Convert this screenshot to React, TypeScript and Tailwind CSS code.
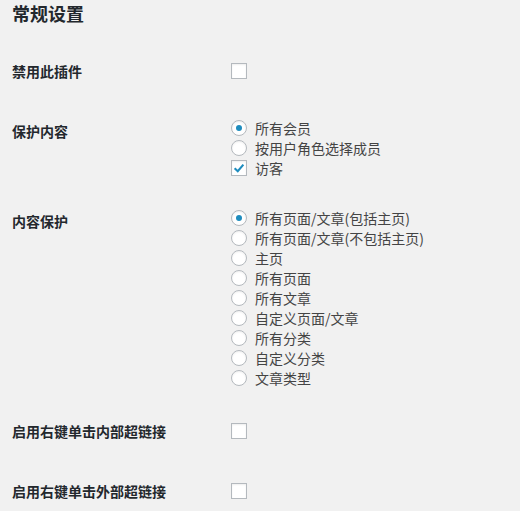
import React from 'react';

const font = { fontFamily: '"Noto Sans CJK SC", "Noto Sans", sans-serif' };

const Checkbox: React.FC<{ checked?: boolean }> = ({ checked }) => (
  <span className="flex h-4 w-4 shrink-0 items-center justify-center border border-[#b4b9be] bg-white shadow-[inset_0_1px_2px_rgba(0,0,0,0.07)]">
    {checked && (
      <svg width="14" height="14" viewBox="0 0 16 16">
        <path d="M3 8.2 L6.6 11.6 L13 4.2" fill="none" stroke="#1e8cbe" strokeWidth="2.4" />
      </svg>
    )}
  </span>
);

const Radio: React.FC<{ checked?: boolean }> = ({ checked }) => (
  <span className="flex h-4 w-4 shrink-0 items-center justify-center rounded-full border border-[#b4b9be] bg-white shadow-[inset_0_1px_2px_rgba(0,0,0,0.07)]">
    {checked && <span className="h-[6px] w-[6px] rounded-full bg-[#1e8cbe]" />}
  </span>
);

type Option = { text: string; checked?: boolean; box?: boolean };

const OptionList: React.FC<{ options: Option[] }> = ({ options }) => (
  <div className="flex flex-col">
    {options.map((o) => (
      <label key={o.text} className="flex h-5 items-center gap-2 text-[14px] leading-5 text-[#444]">
        {o.box ? <Checkbox checked={o.checked} /> : <Radio checked={o.checked} />}
        <span className="-mt-[1px]">{o.text}</span>
      </label>
    ))}
  </div>
);

const Label: React.FC<{ text: string; pad: string }> = ({ text, pad }) => (
  <div className={`w-[219px] shrink-0 text-[14px] font-bold leading-5 text-[#23282d] ${pad}`}>{text}</div>
);

const protectOptions: Option[] = [
  { text: '所有会员', checked: true },
  { text: '按用户角色选择成员' },
  { text: '访客', checked: true, box: true },
];

const contentOptions: Option[] = [
  { text: '所有页面/文章(包括主页)', checked: true },
  { text: '所有页面/文章(不包括主页)' },
  { text: '主页' },
  { text: '所有页面' },
  { text: '所有文章' },
  { text: '自定义页面/文章' },
  { text: '所有分类' },
  { text: '自定义分类' },
  { text: '文章类型' },
];

export default function App() {
  return (
    <div className="h-[511px] w-[520px] overflow-hidden bg-[#f1f1f1] px-[12px]" style={font}>
      <h2 className="pt-[3px] pb-[2px] text-[18px] font-semibold leading-5 text-[#23282d]">常规设置</h2>

      {/* 禁用此插件 */}
      <div className="mt-[36px] flex items-start">
        <Label text="禁用此插件" pad="" />
        <div className="flex h-5 items-center">
          <Checkbox />
        </div>
      </div>

      {/* 保护内容 */}
      <div className="mt-[37px] flex items-start">
        <Label text="保护内容" pad="pt-[3px]" />
        <OptionList options={protectOptions} />
      </div>

      {/* 内容保护 */}
      <div className="mt-[30px] flex items-start">
        <Label text="内容保护" pad="pt-[3px]" />
        <OptionList options={contentOptions} />
      </div>

      <div className="mt-[33px] flex items-start">
        <Label text="启用右键单击内部超链接" pad="" />
        <div className="flex h-5 items-center">
          <Checkbox />
        </div>
      </div>

      <div className="mt-[40px] flex items-start">
        <Label text="启用右键单击外部超链接" pad="" />
        <div className="flex h-5 items-center">
          <Checkbox />
        </div>
      </div>
    </div>
  );
}
